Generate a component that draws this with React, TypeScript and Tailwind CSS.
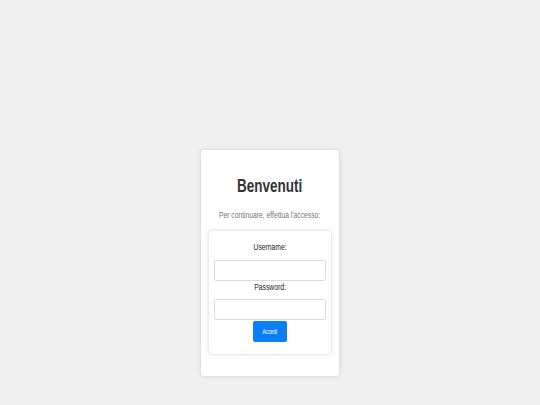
import type { ReactNode } from "react";

// the reference text is a narrow grotesque; squeeze Liberation Sans to match
function Narrow({ children, className }: { children: ReactNode; className?: string }) {
  return (
    <div className={`flex justify-center ${className ?? ""}`}>
      <span className="inline-block origin-center scale-x-[0.75] whitespace-nowrap">{children}</span>
    </div>
  );
}

export default function App() {
  return (
    <div
      className="min-h-[405px] w-full bg-[#efefef] pt-[150px]"
      style={{ fontFamily: '"Liberation Sans", Arial, sans-serif' }}
    >
      {/* Login card */}
      <div className="mx-auto w-[138px] rounded-[3px] bg-white px-[8px] pt-[26px] pb-[22px] shadow-[0_0_4px_rgba(0,0,0,0.15)]">
        <Narrow className="text-[18px] font-bold leading-[20px] text-[#333]">Benvenuti</Narrow>
        <Narrow className="mt-[13px] text-[9px] leading-[12px] text-[#777]">
          Per continuare, effettua l'accesso:
        </Narrow>

        <form className="mt-[10px] flex flex-col items-stretch rounded-[3px] bg-white px-[5px] pt-[10px] pb-[12px] shadow-[0_0_4px_rgba(0,0,0,0.18)]">
          <Narrow className="text-[9px] leading-[12px] text-[#222]">Username:</Narrow>
          <input
            type="text"
            className="mt-[7px] h-[21px] w-full rounded-[2px] border border-[#dcdcdc] bg-white"
          />
          <Narrow className="text-[9px] leading-[12px] text-[#222]">Password:</Narrow>
          <input
            type="password"
            className="mt-[6px] h-[21px] w-full rounded-[2px] border border-[#dcdcdc] bg-white"
          />
          <button
            type="button"
            className="mx-auto mt-[1px] h-[21px] w-[34px] rounded-[2px] bg-[#0a7ff5] text-[6.5px] text-white"
          >
            <span className="inline-block scale-x-[0.75]">Accedi</span>
          </button>
        </form>
      </div>
    </div>
  );
}
